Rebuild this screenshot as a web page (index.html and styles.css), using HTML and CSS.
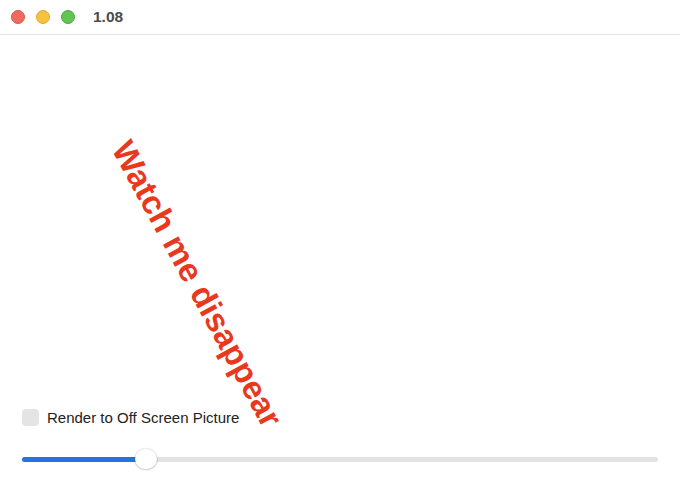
FILE: index.html
```html
<!DOCTYPE html>
<html>
<head>
<meta charset="utf-8">
<link rel="stylesheet" href="styles.css">
</head>
<body>
<div class="window">
  <div class="titlebar">
    <span class="light red"></span>
    <span class="light yellow"></span>
    <span class="light green"></span>
    <span class="title">1.08</span>
  </div>
  <div class="canvas">
    <div class="rot">Watch me disappear</div>
  </div>
  <div class="controls">
    <label class="check"><span class="box"></span><span>Render to Off Screen Picture</span></label>
    <div class="slider">
      <div class="fill"></div>
      <div class="thumb"></div>
    </div>
  </div>
</div>
</body>
</html>
```
FILE: styles.css
```css
html, body { margin: 0; padding: 0; background: #fff; }
body { font-family: "Liberation Sans", Arial, sans-serif; }
.window { width: 680px; height: 500px; display: flex; flex-direction: column; overflow: hidden; }
.titlebar { height: 35px; box-sizing: border-box; border-bottom: 1px solid #e4e4e4; display: flex; align-items: center; padding-left: 11px; gap: 11px; }
.light { width: 14px; height: 14px; border-radius: 50%; box-sizing: border-box; }
.red { background: #ee6a5f; border: 1px solid #d9574d; }
.yellow { background: #f5c33b; border: 1px solid #dea934; }
.green { background: #61c454; border: 1px solid #52a843; }
.title { margin-left: 7px; font-weight: bold; font-size: 15.5px; color: #4b4b4b; }
.canvas { flex: 1; position: relative; }
.rot { position: absolute; left: 17px; top: 230px; width: 360px; text-align: center; font-weight: bold; font-size: 33px; color: #e8381e; transform: rotate(61.5deg); white-space: nowrap; line-height: 38px; }
.controls { padding: 0 22px 38px 22px; display: flex; flex-direction: column; gap: 31px; position: relative; }
.check { display: flex; align-items: center; gap: 8px; font-size: 15px; color: #222; }
.box { width: 17px; height: 17px; border-radius: 4px; background: #e4e4e4; }
.slider { height: 5px; border-radius: 3px; background: #e3e3e3; position: relative; }
.fill { width: 122px; height: 5px; border-radius: 3px; background: #2c6fe2; }
.thumb { position: absolute; left: 113px; top: -8px; width: 22px; height: 20px; border-radius: 10px; background: #fff; box-shadow: 0 0 2px rgba(0,0,0,0.25), 0 1px 2px rgba(0,0,0,0.15); }
```
